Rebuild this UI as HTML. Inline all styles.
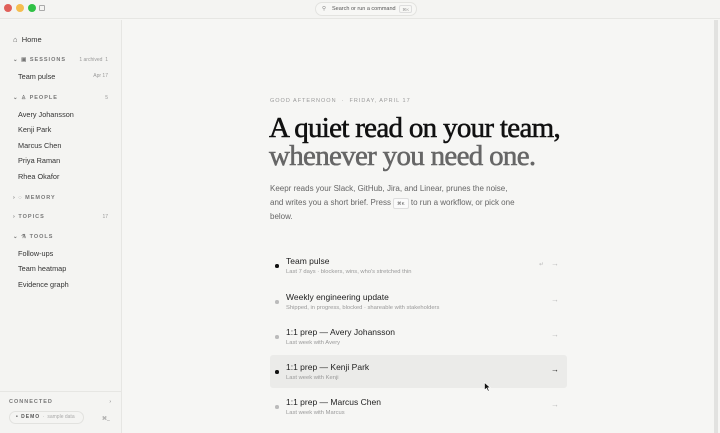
<!DOCTYPE html>
<html><head><meta charset="utf-8"><style>
*{box-sizing:border-box;margin:0;padding:0}
body{width:720px;height:433px;overflow:hidden;background:#f6f6f4;font-family:"Liberation Sans",sans-serif;position:relative;color:#222}
.tb{position:absolute;left:0;top:0;width:720px;height:19px;border-bottom:1px solid #e6e6e3;background:#f4f4f2}
.dot{position:absolute;top:4px;width:8px;height:8px;border-radius:50%}
.search{position:absolute;left:315px;top:2px;width:102px;height:14px;border:1px solid #e3e3e0;border-radius:7px;background:#f7f7f5;font-size:5.5px;color:#555;line-height:12px;padding-left:16px}
.search .k{position:absolute;right:4px;top:2px;height:8px;border:1px solid #ddd;border-radius:2px;font-size:4px;line-height:7px;padding:0 2px;color:#999}
.sb{position:absolute;left:0;top:20px;width:122px;height:413px;border-right:1px solid #e6e6e3;background:#f4f4f2}
.it{position:absolute;left:18px;font-size:7.3px;color:#333}
.hd{position:absolute;left:13px;font-size:5.5px;letter-spacing:1px;font-weight:bold;color:#777}
.cnt{position:absolute;right:13px;font-size:5px;color:#999}
.row{position:absolute;left:270px;width:297px;height:33px;border-radius:3px}
.row .b{position:absolute;left:5px;top:15px;width:3.5px;height:3.5px;border-radius:50%;background:#bbb}
.row .t{position:absolute;left:16px;top:7px;font-size:8.5px;color:#222}
.row .s{position:absolute;left:16px;top:20px;font-size:5.8px;color:#999}
.row .a{position:absolute;right:8px;top:10px;font-size:8px;color:#bbb}
</style></head><body>
<div class="tb">
<div class="dot" style="left:4px;background:#e0605a"></div>
<div class="dot" style="left:16px;background:#f5bd4f"></div>
<div class="dot" style="left:28px;background:#2fc145"></div>
<div style="position:absolute;left:39px;top:5px;width:6px;height:6px;border:1px solid #aaa;border-radius:1px"></div>
<div class="search"><span style="position:absolute;left:6px;top:0;color:#888">&#9906;</span>Search or run a command<span class="k">⌘K</span></div>
</div>
<div class="sb">
<div class="it" style="left:13px;top:15px;font-size:7.5px"><span style="color:#555">⌂</span>&nbsp; Home</div>
<div class="hd" style="top:37px">⌄ ▣ SESSIONS</div><div class="cnt" style="top:37px;letter-spacing:0">1 archived &nbsp;1</div>
<div class="it" style="top:52px">Team pulse</div><div class="cnt" style="top:53px">Apr 17</div>
<div class="hd" style="top:75px">⌄ ♙ PEOPLE</div><div class="cnt" style="top:75px">5</div>
<div class="it" style="top:90px">Avery Johansson</div>
<div class="it" style="top:105px">Kenji Park</div>
<div class="it" style="top:121px">Marcus Chen</div>
<div class="it" style="top:136px">Priya Raman</div>
<div class="it" style="top:152px">Rhea Okafor</div>
<div class="hd" style="top:175px">› ◌ MEMORY</div>
<div class="hd" style="top:194px">› TOPICS</div><div class="cnt" style="top:194px">17</div>
<div class="hd" style="top:214px">⌄ ⚗ TOOLS</div>
<div class="it" style="top:229px">Follow-ups</div>
<div class="it" style="top:244px">Team heatmap</div>
<div class="it" style="top:260px">Evidence graph</div>
<div style="position:absolute;left:0;top:371px;width:121px;border-top:1px solid #e6e6e3"></div>
<div class="hd" style="left:9px;top:379px">CONNECTED</div><div class="cnt" style="top:379px;right:10px;color:#777">›</div>
<div style="position:absolute;left:9px;top:391px;width:75px;height:13px;border:1px solid #e2e2df;border-radius:7px;font-size:5px;line-height:11px;padding-left:6px;color:#555"><b style="letter-spacing:1px">• DEMO</b> <span style="color:#aaa">&nbsp;·&nbsp; sample data</span></div>
<div style="position:absolute;left:102px;top:396px;font-size:5px;color:#888">⌘_</div>
</div>
<div style="position:absolute;left:714px;top:20px;width:4px;height:413px;background:#e2e2e0"></div>
<div style="position:absolute;left:270px;top:98px;font-size:5.5px;letter-spacing:1px;color:#999">GOOD AFTERNOON &nbsp;·&nbsp; FRIDAY, APRIL 17</div>
<div style="position:absolute;left:269px;top:114px;font-family:'Liberation Serif',serif;font-size:29px;line-height:28px;color:#111;letter-spacing:-0.7px;white-space:nowrap;-webkit-text-stroke:0.55px #111">A quiet read on your team,<br><span style="color:#666;-webkit-text-stroke:0.55px #666">whenever you need one.</span></div>
<div style="position:absolute;left:270px;top:182px;width:250px;font-size:8px;line-height:14px;color:#666">Keepr reads your Slack, GitHub, Jira, and Linear, prunes the noise, and writes you a short brief. Press <span style="display:inline-block;border:1px solid #ddd;border-radius:2px;font-size:4.5px;line-height:9px;padding:0 3px;color:#555;background:#fafafa">⌘K</span> to run a workflow, or pick one below.</div>
<div class="row" style="top:249px"><div class="b" style="background:#111"></div><div class="t">Team pulse</div><div class="s">Last 7 days · blockers, wins, who's stretched thin</div><div class="a"><span style="font-size:6px;margin-right:7px">↵</span>→</div></div>
<div class="row" style="top:285px"><div class="b"></div><div class="t">Weekly engineering update</div><div class="s">Shipped, in progress, blocked · shareable with stakeholders</div><div class="a">→</div></div>
<div class="row" style="top:320px"><div class="b"></div><div class="t">1:1 prep — Avery Johansson</div><div class="s">Last week with Avery</div><div class="a">→</div></div>
<div class="row" style="top:355px;background:#ebebe9"><div class="b" style="background:#111"></div><div class="t">1:1 prep — Kenji Park</div><div class="s">Last week with Kenji</div><div class="a" style="color:#222">→</div></div>
<div class="row" style="top:390px"><div class="b"></div><div class="t">1:1 prep — Marcus Chen</div><div class="s">Last week with Marcus</div><div class="a">→</div></div>
<svg style="position:absolute;left:484px;top:382px" width="7" height="10" viewBox="0 0 7 10"><path d="M0.5 0.5 L0.5 8 L2.5 6.2 L4 9.3 L5.2 8.7 L3.8 5.8 L6.3 5.6 Z" fill="#111" stroke="#fff" stroke-width="0.6"/></svg>
</body></html>
